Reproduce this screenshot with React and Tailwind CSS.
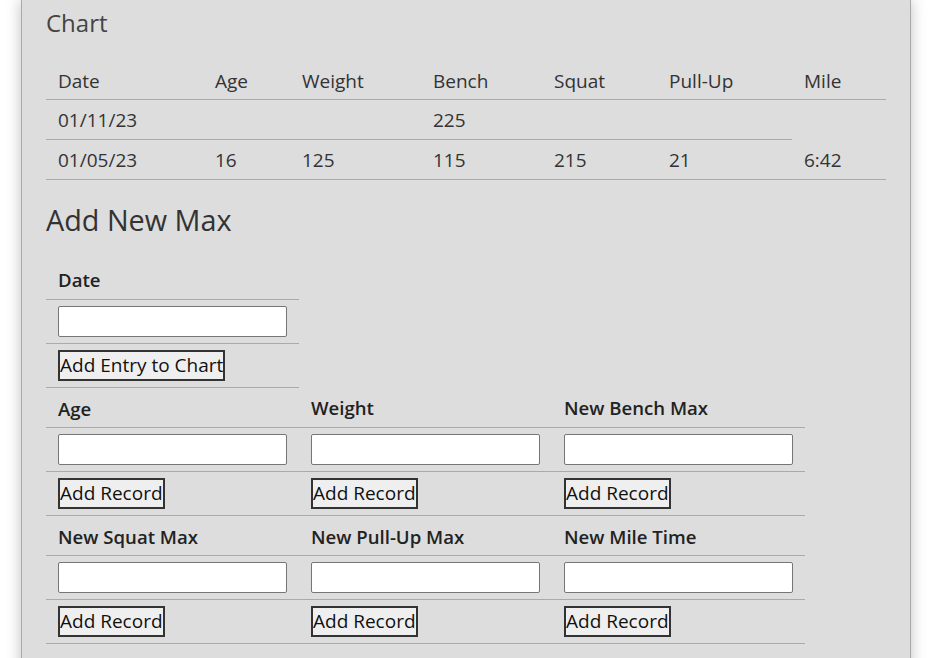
const FONT = { fontFamily: '"Open Sans", "Noto Sans", sans-serif' }

const COLS = [
  { key: 'date', label: 'Date', w: 157 },
  { key: 'age', label: 'Age', w: 87 },
  { key: 'weight', label: 'Weight', w: 131 },
  { key: 'bench', label: 'Bench', w: 121 },
  { key: 'squat', label: 'Squat', w: 115 },
  { key: 'pullup', label: 'Pull-Up', w: 135 },
  { key: 'mile', label: 'Mile', w: 94 },
]

// first entry has no mile cell, so its row stops short
const ROWS = [
  ['01/11/23', '', '', '225', '', ''],
  ['01/05/23', '16', '125', '115', '215', '21', '6:42'],
]

const FIELDS = [
  ['Age', 'Weight', 'New Bench Max'],
  ['New Squat Max', 'New Pull-Up Max', 'New Mile Time'],
]

function Btn({ children }) {
  return (
    <button
      type="button"
      className="h-[31px] border-2 border-[#333] bg-[#efefef] px-0 text-[19px] leading-none text-[#111]"
      style={FONT}
    >
      {children}
    </button>
  )
}

function Field() {
  return <input type="text" className="block h-[31px] w-[229px] rounded-[2px] border border-[#767676] bg-white" />
}

export default function App() {
  return (
    <div className="min-h-screen bg-white" style={FONT}>
      <div className="ml-[21px] w-[890px] border-x border-[#aaa] bg-[#dddddd] px-6 pb-10 pt-[7px] shadow-[0_0_14px_rgba(0,0,0,0.25)]">
        <h2 className="text-[24px] leading-8 text-[#444]">Chart</h2>

        <table className="mt-5 w-[840px] table-fixed border-collapse text-[19px] text-[#333]">
          <colgroup>
            {COLS.map((c) => <col key={c.key} style={{ width: c.w }} />)}
          </colgroup>
          <thead>
            <tr className="h-10">
              {COLS.map((c) => (
                <th key={c.key} className="border-b border-[#aaa] pl-3 pt-1 text-left font-normal">{c.label}</th>
              ))}
            </tr>
          </thead>
          <tbody>
            {ROWS.map((r) => (
              <tr key={r[0]} className="h-10">
                {r.map((v, i) => (
                  <td key={i} className="border-b border-[#aaa] pl-3 pt-0.5">{v}</td>
                ))}
              </tr>
            ))}
          </tbody>
        </table>

        <h2 className="mt-[22px] text-[28.8px] leading-9 text-[#333]">Add New Max</h2>

        <table className="mt-[22px] border-collapse text-[18.6px] text-[#222]">
          <colgroup>
            <col className="w-[253px]" />
            <col className="w-[253px]" />
            <col className="w-[253px]" />
          </colgroup>
          <tbody>
            <tr className="h-10">
              <th className="border-b border-[#aaa] pl-3 pt-0.5 text-left font-semibold">Date</th>
            </tr>
            <tr className="h-11">
              <td className="border-b border-[#aaa] pl-3"><Field /></td>
            </tr>
            <tr className="h-11">
              <td className="border-b border-[#aaa] pl-3"><Btn>Add Entry to Chart</Btn></td>
            </tr>
            {FIELDS.map((group) => [
              <tr key={group[0] + '-l'} className="h-10">
                {group.map((f) => (
                  <th key={f} className="border-b border-[#aaa] pl-3 pt-0.5 text-left font-semibold">{f}</th>
                ))}
              </tr>,
              <tr key={group[0] + '-i'} className="h-11">
                {group.map((f) => (
                  <td key={f} className="border-b border-[#aaa] pl-3"><Field /></td>
                ))}
              </tr>,
              <tr key={group[0] + '-b'} className="h-11">
                {group.map((f) => (
                  <td key={f} className="border-b border-[#aaa] pl-3"><Btn>Add Record</Btn></td>
                ))}
              </tr>,
            ])}
          </tbody>
        </table>
      </div>
    </div>
  )
}
